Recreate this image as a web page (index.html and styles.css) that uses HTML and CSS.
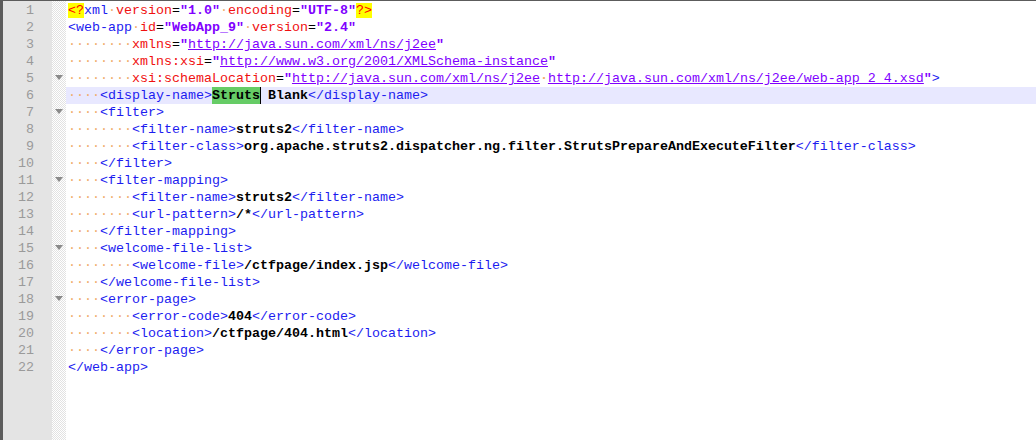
FILE: index.html
```html
<!DOCTYPE html>
<html>
<head>
<meta charset="utf-8">
<link rel="stylesheet" href="styles.css">
</head>
<body>
<div class="editor">
  <div class="nums">
    <div>1</div><div>2</div><div>3</div><div>4</div><div>5</div><div>6</div><div>7</div><div>8</div><div>9</div><div>10</div><div>11</div>
    <div>12</div><div>13</div><div>14</div><div>15</div><div>16</div><div>17</div><div>18</div><div>19</div><div>20</div><div>21</div><div>22</div>
  </div>
  <div class="fold">
    <div></div><div></div><div></div><div></div><div><span class="tri"></span></div><div></div><div><span class="tri"></span></div><div></div><div></div><div></div><div><span class="tri"></span></div>
    <div></div><div></div><div></div><div><span class="tri"></span></div><div></div><div></div><div><span class="tri"></span></div><div></div><div></div><div></div><div></div>
  </div>
  <div class="code">
    <div class="ln"><span class="xs">&lt;?</span><span class="t">xml</span><span class="w">·</span><span class="a">version</span>=<span class="v">"1.0"</span><span class="w">·</span><span class="a">encoding</span>=<span class="v">"UTF-8"</span><span class="xs">?&gt;</span></div>
    <div class="ln"><span class="t">&lt;web-app</span><span class="w">·</span><span class="a">id</span>=<span class="v">"WebApp_9"</span><span class="w">·</span><span class="a">version</span>=<span class="v">"2.4"</span></div>
    <div class="ln"><span class="w">········</span><span class="a">xmlns</span>=<span class="v">"<span class="u">http://java.sun.com/xml/ns/j2ee</span>"</span></div>
    <div class="ln"><span class="w">········</span><span class="a">xmlns:xsi</span>=<span class="v">"<span class="u">http://www.w3.org/2001/XMLSchema-instance</span>"</span></div>
    <div class="ln"><span class="w">········</span><span class="a">xsi:schemaLocation</span>=<span class="v">"<span class="u">http://java.sun.com/xml/ns/j2ee</span><span class="w">·</span><span class="u">http://java.sun.com/xml/ns/j2ee/web-app_2_4.xsd</span>"</span><span class="t">&gt;</span></div>
    <div class="ln cur"><span class="w">····</span><span class="t">&lt;display-name&gt;</span><span class="x hl">Struts</span><span class="caret"></span><span class="x"> Blank</span><span class="t">&lt;/display-name&gt;</span></div>
    <div class="ln"><span class="w">····</span><span class="t">&lt;filter&gt;</span></div>
    <div class="ln"><span class="w">········</span><span class="t">&lt;filter-name&gt;</span><span class="x">struts2</span><span class="t">&lt;/filter-name&gt;</span></div>
    <div class="ln"><span class="w">········</span><span class="t">&lt;filter-class&gt;</span><span class="x">org.apache.struts2.dispatcher.ng.filter.StrutsPrepareAndExecuteFilter</span><span class="t">&lt;/filter-class&gt;</span></div>
    <div class="ln"><span class="w">····</span><span class="t">&lt;/filter&gt;</span></div>
    <div class="ln"><span class="w">····</span><span class="t">&lt;filter-mapping&gt;</span></div>
    <div class="ln"><span class="w">········</span><span class="t">&lt;filter-name&gt;</span><span class="x">struts2</span><span class="t">&lt;/filter-name&gt;</span></div>
    <div class="ln"><span class="w">········</span><span class="t">&lt;url-pattern&gt;</span><span class="x">/*</span><span class="t">&lt;/url-pattern&gt;</span></div>
    <div class="ln"><span class="w">····</span><span class="t">&lt;/filter-mapping&gt;</span></div>
    <div class="ln"><span class="w">····</span><span class="t">&lt;welcome-file-list&gt;</span></div>
    <div class="ln"><span class="w">········</span><span class="t">&lt;welcome-file&gt;</span><span class="x">/ctfpage/index.jsp</span><span class="t">&lt;/welcome-file&gt;</span></div>
    <div class="ln"><span class="w">····</span><span class="t">&lt;/welcome-file-list&gt;</span></div>
    <div class="ln"><span class="w">····</span><span class="t">&lt;error-page&gt;</span></div>
    <div class="ln"><span class="w">········</span><span class="t">&lt;error-code&gt;</span><span class="x">404</span><span class="t">&lt;/error-code&gt;</span></div>
    <div class="ln"><span class="w">········</span><span class="t">&lt;location&gt;</span><span class="x">/ctfpage/404.html</span><span class="t">&lt;/location&gt;</span></div>
    <div class="ln"><span class="w">····</span><span class="t">&lt;/error-page&gt;</span></div>
    <div class="ln"><span class="t">&lt;/web-app&gt;</span></div>
  </div>
</div>
</body>
</html>
```
FILE: styles.css
```css
html, body {
  margin: 0;
  padding: 0;
  background: #ffffff;
}
.editor {
  display: flex;
  width: 1036px;
  height: 440px;
  box-sizing: border-box;
  border-top: 1px solid #5c5c5c;
  border-left: 3px solid #5c5c5c;
  font-family: "Liberation Mono", "DejaVu Sans Mono", "Courier New", monospace;
  font-size: 13.33px;
  line-height: 17px;
  background: #ffffff;
}
.nums {
  width: 49px;
  box-sizing: border-box;
  padding-top: 1px;
  padding-right: 18px;
  background: #e4e4e4;
  color: #9a9a9a;
  text-align: right;
}
.nums div, .fold div {
  height: 17px;
}
.fold {
  width: 14px;
  padding-top: 1px;
  background-color: #ffffff;
  background-image: repeating-conic-gradient(#e2e2e2 0 25%, #ffffff 0 50%);
  background-size: 2px 2px;
}
.fold div {
  display: flex;
  align-items: center;
  justify-content: center;
}
.tri {
  width: 0;
  height: 0;
  border-left: 4px solid transparent;
  border-right: 4px solid transparent;
  border-top: 5px solid #8a8a8a;
  margin-top: -3px;
}
.code {
  flex: 1;
  padding-top: 1px;
  color: #000000;
}
.ln {
  height: 17px;
  padding-left: 2px;
  white-space: pre;
}
.cur {
  background: #e8e8ff;
}
.t { color: #1c1cf0; }
.a { color: #f01010; }
.v { color: #8000ff; font-weight: bold; }
.u { text-decoration: underline; font-weight: normal; }
.x { font-weight: bold; color: #000000; }
.w { color: #f0ad6a; }
.xs { color: #ff0000; background: #ffff00; }
.hl {
  display: inline-block;
  height: 17px;
  vertical-align: top;
  background: #66cc66;
}
.caret {
  display: inline-block;
  width: 0;
  height: 17px;
  vertical-align: top;
  border-left: 1px solid #000000;
  margin-right: -1px;
}
```
